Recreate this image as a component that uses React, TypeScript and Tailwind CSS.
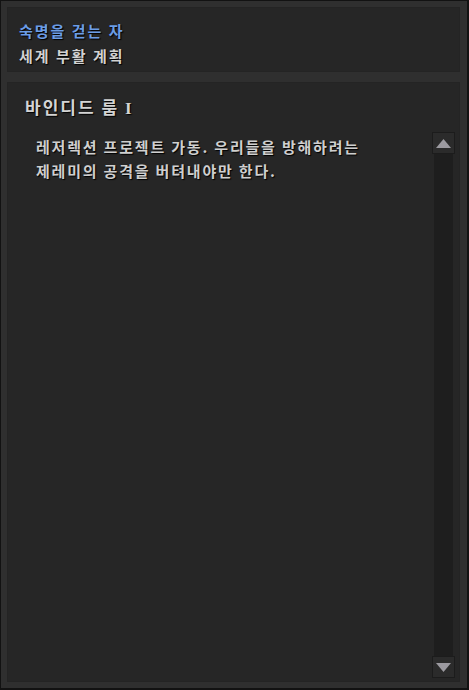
export default function App() {
  return (
    <div
      className="w-[469px] h-[690px] bg-[#121212] pt-px pl-px pr-[2px] pb-[2px]"
      style={{ fontFamily: '"Noto Sans CJK KR", "Noto Sans", sans-serif' }}
    >
      <div className="h-full bg-[#2f2f2f] pt-[6px] pl-[6px] pr-[7px] pb-[6px] flex flex-col gap-[10px]">
        {/* Quest header */}
        <div className="h-[65px] shrink-0 bg-[#262626] border border-[#242424] pl-[11px] pt-[10px] tracking-[2px] [text-shadow:1px_1px_1px_#000]">
          <p className="text-[15px] leading-[25px] font-bold text-[#6b9de6]">숙명을 걷는 자</p>
          <p className="text-[15px] leading-[25px] font-bold text-[#d2d2d2]">세계 부활 계획</p>
        </div>

        {/* Detail panel */}
        <div className="flex-1 bg-[#262626] border border-[#242424] flex relative">
          <div className="flex-1 pl-[17px] pt-[11px] tracking-[2px] [text-shadow:1px_1px_1px_#000]">
            <h2 className="text-[17px] leading-[26px] font-bold text-[#d4d4d4]">
              바인디드 룸 <span className="font-['Liberation_Serif',serif]">I</span>
            </h2>
            <div className="pl-[11px] pt-[13px] text-[15px] leading-[24px] font-bold tracking-[1.8px] text-[#cfcfcf]">
              <p>레저렉션 프로젝트 가동. 우리들을 방해하려는</p>
              <p>제레미의 공격을 버텨내야만 한다.</p>
            </div>
          </div>

          {/* Scrollbar */}
          <div className="w-[23px] mr-[4px] mt-[49px] mb-[3px] flex flex-col">
            <div className="h-[22px] bg-[#2b2b2b] border border-[#1c1c1c] flex items-center justify-center">
              <svg width="15" height="9" viewBox="0 0 15 9">
                <polygon points="7.5,0 15,9 0,9" fill="#9c9aa0" />
              </svg>
            </div>
            <div className="flex-1 mx-[2px] bg-[#1e1e1e]" />
            <div className="h-[22px] bg-[#2b2b2b] border border-[#1c1c1c] flex items-center justify-center">
              <svg width="15" height="9" viewBox="0 0 15 9">
                <polygon points="0,0 15,0 7.5,9" fill="#9c9aa0" />
              </svg>
            </div>
          </div>
        </div>
      </div>
    </div>
  );
}
